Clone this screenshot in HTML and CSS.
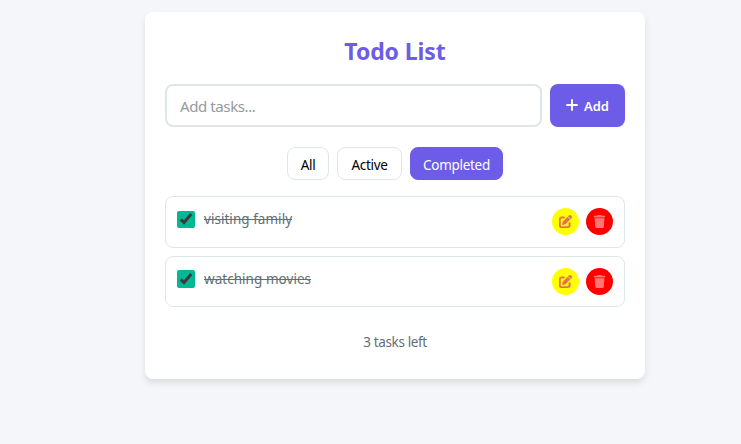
FILE: index.html
```html
<!DOCTYPE html>
<html lang="en">
<head>
<meta charset="utf-8">
<title>Todo List</title>
<link rel="stylesheet" href="styles.css">
</head>
<body>
<svg class="defs" width="0" height="0" aria-hidden="true">
  <symbol id="check" viewBox="0 0 18 18"><path d="M3.800 9.400 7 12.500 14.300 4.100" fill="none" stroke="#3b3b3b" stroke-width="3"/></symbol>
  <symbol id="edit" viewBox="0 0 512 512"><path fill="currentColor" stroke="currentColor" stroke-width="14" d="M471.600 21.700c-21.900-21.900-57.300-21.900-79.200 0L362.300 51.700l97.900 97.900 30.100-30.100c21.900-21.900 21.900-57.300 0-79.200L471.600 21.700zm-299.200 220c-6.100 6.100-10.800 13.600-13.500 21.900l-29.600 88.800c-2.900 8.600-.6 18.100 5.800 24.600s15.900 8.700 24.600 5.800l88.800-29.600c8.200-2.700 15.700-7.400 21.900-13.500L437.700 172.300 339.700 74.300 172.400 241.700zM96 64C43 64 0 107 0 160V416c0 53 43 96 96 96H352c53 0 96-43 96-96V320c0-17.700-14.300-32-32-32s-32 14.300-32 32v96c0 17.700-14.300 32-32 32H96c-17.700 0-32-14.300-32-32V160c0-17.700 14.300-32 32-32h96c17.700 0 32-14.300 32-32s-14.300-32-32-32H96z"/></symbol>
  <symbol id="trash" viewBox="0 0 448 512"><path fill="currentColor" d="M135.200 17.700L128 32H32C14.300 32 0 46.300 0 64S14.300 96 32 96H416c17.700 0 32-14.300 32-32s-14.300-32-32-32H320l-7.200-14.300C307.400 6.800 296.300 0 284.200 0H163.800c-12.100 0-23.200 6.800-28.600 17.700zM416 128H32L53.200 467c1.600 25.300 22.600 45 47.900 45H346.900c25.300 0 46.300-19.700 47.900-45L416 128z"/></symbol>
</svg>
<main class="card">
  <h1 class="title">Todo List</h1>
  <div class="entry">
    <input class="entry-input" type="text" placeholder="Add tasks...">
    <button class="add"><svg width="12" height="12" viewBox="0 0 12 12"><path d="M6 1v10M1 6h10" stroke="#fff" stroke-width="1.900" stroke-linecap="round"/></svg><span>Add</span></button>
  </div>
  <div class="filters">
    <button class="filter all">All</button>
    <button class="filter active">Active</button>
    <button class="filter completed selected">Completed</button>
  </div>
  <ul class="tasks">
    <li class="task">
      <svg class="box" width="18" height="17" viewBox="0 0 18 17"><use href="#check" width="18" height="18" y="-1"/></svg>
      <span class="label">visiting family</span>
      <button class="action edit"><svg width="13" height="13"><use href="#edit"/></svg></button>
      <button class="action delete"><svg width="13" height="13"><use href="#trash"/></svg></button>
    </li>
    <li class="task">
      <svg class="box" width="18" height="18"><use href="#check"/></svg>
      <span class="label">watching movies</span>
      <button class="action edit"><svg width="13" height="13"><use href="#edit"/></svg></button>
      <button class="action delete"><svg width="13" height="13"><use href="#trash"/></svg></button>
    </li>
  </ul>
  <p class="count"><span>3 tasks left</span></p>
</main>
</body>
</html>
```
FILE: styles.css
```css
* { box-sizing: border-box; margin: 0; padding: 0; }
body {
  min-height: 100vh;
  background: #f5f6fa;
  color: #2d3436;
  font-family: "Segoe UI", "Noto Sans", "Open Sans", sans-serif;
  padding: 12px 0 0 145px;
}
.defs { display: none; }
button, input { font-family: inherit; }
.card {
  width: 500px;
  height: 367px;
  padding: 20px;
  background: #fff;
  border-radius: 8px;
  box-shadow: 0 4px 6px rgba(0, 0, 0, .1);
}
.title {
  height: 32px;
  margin: 3px 0 17px;
  line-height: 32px;
  text-align: center;
  font-size: 23px;
  font-weight: 700;
  letter-spacing: -.1px;
  color: #6c5ce7;
}
.entry { display: flex; gap: 8px; height: 43px; }
.entry-input {
  flex: 1;
  min-width: 0;
  padding: 0 13px;
  border: 2px solid #dfe6e9;
  border-radius: 8px;
  font-size: 15px;
  letter-spacing: -.4px;
}
.entry-input::placeholder { color: #959a9b; }
.add {
  display: flex;
  align-items: center;
  justify-content: center;
  gap: 6px;
  width: 75px;
  border: 0;
  border-radius: 8px;
  background: #6c5ce7;
  color: #fff;
  font-size: 13px;
  font-weight: 600;
}
.add svg { margin-bottom: 2px; }
.add span { padding-top: 1px; }
.filters { display: flex; justify-content: center; gap: 8px; margin-top: 20px; }
.filter {
  height: 33px;
  padding-top: 2px;
  border: 1px solid #dfe6e9;
  border-radius: 8px;
  background: #fff;
  color: #000;
  font-size: 13.500px;
  letter-spacing: -.3px;
}
.all { width: 42px; }
.active { width: 65px; }
.completed { width: 93px; }
.filter.selected { border-color: #6c5ce7; background: #6c5ce7; color: #fff; }
.tasks { display: grid; gap: 8px; margin-top: 16px; list-style: none; }
.task {
  display: flex;
  align-items: flex-start;
  height: 52px;
  padding: 11px;
  border: 1px solid #dfe6e9;
  border-radius: 8px;
}
.task + .task { height: 51px; }
.box { margin-top: 3px; border-radius: 2px; background: #00b894; }
.task + .task .box { margin-top: 2px; }
.label {
  flex: 1;
  margin-left: 9px;
  line-height: 22px;
  font-size: 13.500px;
  letter-spacing: .04px;
  color: #636e72;
  text-decoration: line-through;
}
.action {
  display: grid;
  place-items: center;
  width: 27px;
  height: 27px;
  border: 0;
  border-radius: 50%;
}
.edit { background: #ff0; color: #e17055; }
.delete { margin-left: 7px; background: #f00; color: #ff7675; }
.delete svg { margin-bottom: 1px; }
.count {
  margin-top: 25px;
  line-height: 20px;
  text-align: center;
  font-size: 13.500px;
  letter-spacing: -.35px;
  color: #636e72;
}
```
